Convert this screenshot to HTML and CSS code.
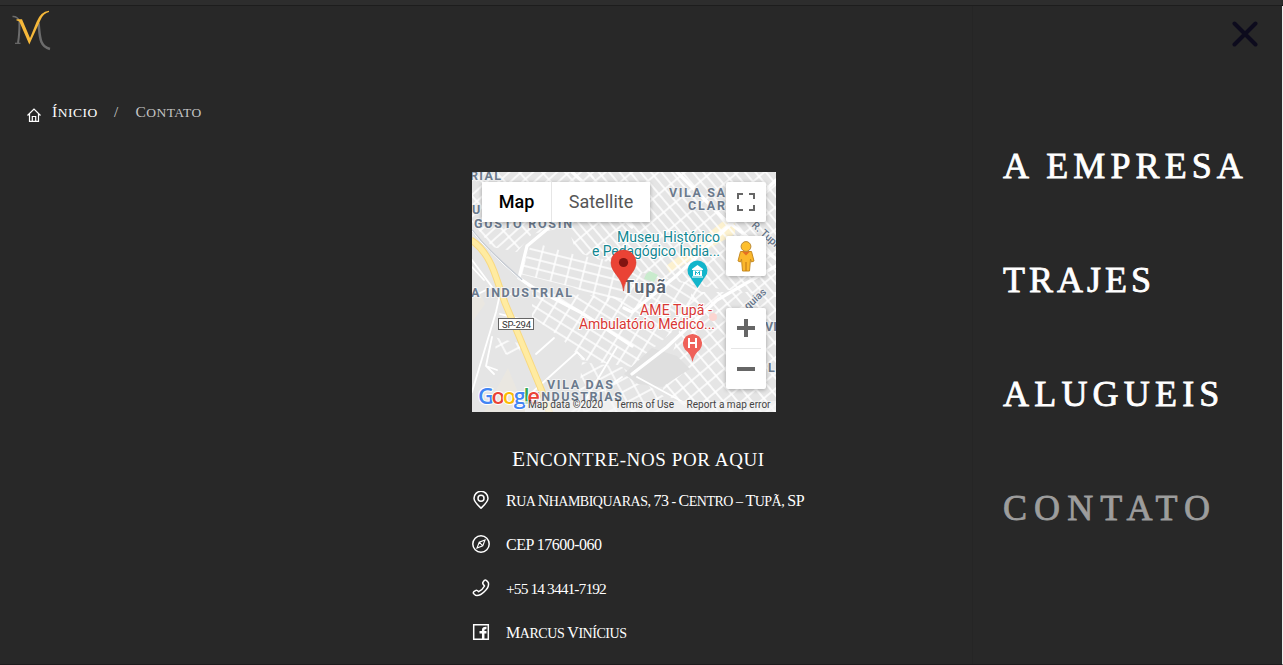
FILE: index.html
```html
<!DOCTYPE html>
<html lang="pt-BR">
<head>
<meta charset="utf-8">
<title>Contato</title>
<link rel="stylesheet" href="styles.css">
</head>
<body>
<div class="topbar"></div>
<div class="page">
  <main class="content">
    <svg class="logo" viewBox="0 0 40 42" width="40" height="42">
      <g fill="none" stroke="#6c6c6c">
        <path d="M0.500 6.500Q5 6 7.500 11" stroke-width="1.500"/>
        <path d="M7.500 11Q7.500 25 6 33" stroke-width="2"/>
        <path d="M3 33.300h5.500" stroke-width="1.200"/>
        <path d="M26.500 13C28 26 27 36 38 39" stroke-width="2.500"/>
      </g>
      <path d="M4.500 9.300h5.500L18 28 24.500 12Q28.500 1.500 37 .7V2Q31.500 3 28.500 10L17.300 34.500 7.500 12Q7 10.500 4.500 10.500Z" fill="#f5b83a"/>
    </svg>
    <nav class="crumbs">
      <svg class="home" viewBox="0 0 14 14" width="14" height="14" fill="none" stroke="#fff" stroke-width="1.200">
        <path d="M.5 7.500 7 1l6.500 6.500M2.500 6v7.300h9V6M5.300 13V8.500h3.400V13"/>
      </svg>
      <a class="crumb-home"><span class="cap">Í</span>nicio</a>
      <span class="slash">/</span>
      <span class="crumb-here"><span class="cap">C</span>ontato</span>
    </nav>
    <section class="contact">
      <div class="map">
        <svg viewBox="0 0 304 240" width="304" height="240">
          <defs>
            <pattern id="g1" width="17" height="8" patternUnits="userSpaceOnUse" patternTransform="rotate(-42)"><path d="M0 1H17M1 0V8" stroke="#fff" stroke-width="1.500"/></pattern>
            <pattern id="g2" width="15" height="9" patternUnits="userSpaceOnUse" patternTransform="translate(55 75) rotate(14)"><path d="M0 1H15M1 0V9" stroke="#fff" stroke-width="1.500"/></pattern>
            <pattern id="g3" width="8" height="17" patternUnits="userSpaceOnUse" patternTransform="rotate(-40)"><path d="M0 1H8M1 0V17" stroke="#fff" stroke-width="1.600"/></pattern>
            <pattern id="g4" width="14" height="10" patternUnits="userSpaceOnUse" patternTransform="rotate(32)"><path d="M0 1H14M1 0V10" stroke="#fff" stroke-width="1.600"/></pattern>
            <pattern id="g5" width="14" height="11" patternUnits="userSpaceOnUse" patternTransform="rotate(-28)"><path d="M0 1H14M1 0V11" stroke="#fff" stroke-width="1.400"/></pattern>
            <pattern id="g6" width="11" height="12" patternUnits="userSpaceOnUse" patternTransform="rotate(-40)"><path d="M0 1H11M1 0V12" stroke="#fff" stroke-width="1.700"/></pattern>
          </defs>
          <rect width="304" height="240" fill="#e5e5e5"/>
          <path d="M0 120h8l5 12L0 150zM36 196l18 44H12z" fill="#eae7e1"/>
          <path d="M215 78 250 50 263 47 263 62 238 76 214 91 198 101 194 94z" fill="#fcf1cf"/>
          <path d="M8 0H125L95 55 60 62 45 80 20 75 0 50V20z" fill="url(#g1)"/>
          <path d="M60 70 104 83 152 90 150 135 100 115 48 102z" fill="url(#g2)"/>
          <path d="M120 0H304V125L215 112 160 98 104 80 96 55z" fill="url(#g3)"/>
          <path d="M60 120 150 125 160 98 235 115 220 140 200 160 160 195 110 188 88 165 60 145z" fill="url(#g4)"/>
          <path d="M220 120H304V240H222L190 220 205 165z" fill="url(#g6)"/>
          <path d="M110 190 150 195 200 230 190 240H105z" fill="url(#g5)"/>
          <path d="M22 165 50 172 45 185 24 180z" fill="url(#g5)"/>
          <path d="M152 202 180 176 205 184 218 197 190 215 166 212z" fill="#dfdfdf"/>
          <path d="M174 102 178 99 186 103 182 110 172 107z" fill="#c9ebcd"/>
          <circle cx="241" cy="145" r="4" fill="#fbd5d1"/>
          <g fill="none" stroke="#fff" stroke-linecap="round">
            <path d="M205 0 250 45 304 87M152 136 160 140 203 105 230 80 304 8M100 0 160 55M55 74 80 53 105 27M55 74 47 106 62 116 108 140 160 174M160 202 195 175 245 128 304 94" stroke-width="3.200"/>
            <path d="M0 220 24 140 28 122 54 122M20 165 14 194 22 202M14 194 25 198M64 182 82 166M55 225 105 180 112 187M145 175 106 240M150 205 100 240M165 205 220 235M0 88 20 115 0 125M0 95 12 108M28 142 60 150" stroke-width="1.800"/>
          </g>
          <path d="M0 58Q13 76 50 108" fill="none" stroke="#c7ccd3" stroke-width="2"/>
          <path d="M0 59Q13 77 50 109L63 119" fill="none" stroke="#fff" stroke-width="1"/>
          <path d="M-1 68Q15 78 24 105L33 131Q53 178 69 217L78 242" fill="none" stroke="#f8d980" stroke-width="7"/>
          <path d="M-1 68Q15 78 24 105L33 131Q53 178 69 217L78 242" fill="none" stroke="#ffeba1" stroke-width="5"/>
          <g class="area">
            <text x="-2" y="7.500" textLength="31">RIAL</text>
            <text x="0" y="42">U</text>
            <text x="2" y="56" textLength="98">GUSTO ROSIN</text>
            <text x="197" y="24.500" textLength="56">VILA SA</text>
            <text x="216" y="37.500" textLength="37">CLAR</text>
            <text x="-1" y="124.500" textLength="101">A INDUSTRIAL</text>
            <text x="75" y="216.500" textLength="66">VILA DAS</text>
            <text x="64" y="229" textLength="86">INDUSTRIAS</text>
            <text x="293" y="159">VI</text>
            <text x="296" y="200">L</text>
          </g>
          <g class="street"><text transform="translate(279 54) rotate(42)">R. Tupis</text><text transform="translate(276 138) rotate(-42)">quias</text></g>
          <text class="city" x="151" y="121" textLength="43">Tupã</text>
          <g class="poi museum">
            <text x="145" y="70" textLength="103">Museu Histórico</text>
            <text x="120" y="84" textLength="128">e Pedagógico Índia...</text>
          </g>
          <g class="poi hospital">
            <text x="168" y="143" textLength="72">AME Tupã -</text>
            <text x="107" y="157" textLength="136">Ambulatório Médico...</text>
          </g>
          <path d="M225.500 116 218 105A10 10 0 1 1 233 105Z" fill="#12b5cb"/>
          <path d="M220 97 225.500 93 231 97V98H220zM221 98.500h9v5.500h-9zM220 104.500h11v1h-11z" fill="#fff"/>
          <path d="M223.500 103v-3.500l2 2 2-2v3.500" fill="none" stroke="#12b5cb"/>
          <path d="M220.500 190Q219 182 213 177.500A9.600 9.600 0 1 1 228 177.500Q222 182 220.500 190Z" fill="#ef6159"/>
          <path d="M217 166v10M224 166v10M217 171h7" stroke="#fff" stroke-width="2"/>
          <path d="M151.500 119C150.500 105 139 101 139 90.500A12.500 12.500 0 0 1 164 90.500C164 101 152.500 105 151.500 119Z" fill="#ea4335" stroke="#d83b2e" stroke-width=".6"/>
          <circle cx="151.500" cy="90.500" r="4.600" fill="#811411"/>
          <rect x="26.500" y="146.500" width="35" height="11" fill="#fff" stroke="#666"/>
          <text class="shield" x="30" y="155.500" textLength="29">SP-294</text>
          <text class="google" x="6" y="232" textLength="62"><tspan fill="#4285f4">G</tspan><tspan fill="#ea4335">o</tspan><tspan fill="#fbbc05">o</tspan><tspan fill="#4285f4">g</tspan><tspan fill="#34a853">l</tspan><tspan fill="#ea4335">e</tspan></text>
          <rect x="53" y="229" width="251" height="11" fill="#f5f5f5" opacity=".7"/>
          <g class="legal">
            <text x="56" y="236" textLength="75">Map data ©2020</text>
            <text x="143" y="236" textLength="59">Terms of Use</text>
            <text x="214.500" y="236" textLength="84">Report a map error</text>
          </g>
        </svg>
        <div class="map-type"><button class="on">Map</button><button>Satellite</button></div>
        <div class="map-tools">
          <div class="tool"><svg viewBox="0 0 18 18" width="18" height="18"><path d="M1 6V1h5M12 1h5v5M17 12v5h-5M6 17H1v-5" fill="none" stroke="#666" stroke-width="2"/></svg></div>
          <div class="tool person"><svg viewBox="0 0 20 32" width="20" height="32">
            <path d="M4.500 11.500h11l2.500 9.500-2.500 1-1-3L13.500 31H6.500L5.500 19l-1 3L2 21z" fill="#fbb72b" stroke="#c58a22"/>
            <path d="m6 11.500 4 4 4-4z" fill="#e56f22"/><path d="M10 22v9" stroke="#bd7414"/>
            <circle cx="10" cy="6.500" r="4.900" fill="#fdbf2d" stroke="#b98a3a"/></svg></div>
          <div class="tool zoom"><svg viewBox="0 0 40 81" width="40" height="81"><path d="M11 20h18M20 11v18M11 61h18" stroke="#666" stroke-width="4"/><path d="M5 40.500h30" stroke="#e6e6e6"/></svg></div>
        </div>
      </div>
      <h2 class="heading"><span class="cap">E</span>ncontre-nos por aqui</h2>
      <ul class="details">
        <li><svg viewBox="0 0 18 18" width="18" height="18"><path d="M9 17.200C6.500 14.800 2 11 2 7.300a7 7 0 0 1 14 0C16 11 11.500 14.800 9 17.200Z"/><circle cx="9" cy="7.200" r="3"/></svg>
          <span class="address"><span class="cap">R</span>ua <span class="cap">N</span>hambiquaras, <span class="cap">73</span> - <span class="cap">C</span>entro – <span class="cap">T</span>upã, <span class="cap">SP</span></span></li>
        <li><svg viewBox="0 0 18 18" width="18" height="18"><circle cx="9" cy="9" r="8.200"/><path d="M13 5 10.800 10.800 5 13 7.200 7.200ZM7.200 7.200l3.600 3.600" stroke-width="1.100"/></svg>
          <span class="cep cap">CEP 17600-060</span></li>
        <li><svg viewBox="0 0 18 18" width="18" height="18"><path d="M12.300 1.400Q13.500.7 14.500 1.500L16.300 3.500Q17.500 8 12.500 12.500 8 17.200 3.500 16.300L1.500 14.500Q1 13.500 1.800 12.700L4 11.400Q5 11 6.700 12.700 10.500 10.800 12.500 7L11 5Q10.500 4 11 3.200Z" stroke-linejoin="round"/></svg>
          <span class="phone cap">+55 14 3441-7192</span></li>
        <li><svg viewBox="0 0 18 18" width="18" height="18"><path d="M1.700 1.700h14.600v14.600H1.700z"/><path d="M11.200 16V7Q11.200 4.700 14.500 5M7.500 9.300h7" stroke-width="2.500"/></svg>
          <span class="social"><span class="cap">M</span>arcus <span class="cap">V</span>inícius</span></li>
      </ul>
    </section>
  </main>
  <aside class="menu">
    <svg class="close" viewBox="0 0 26 26" width="26" height="26"><path d="M2.500 2.500 23.500 23.500M23.500 2.500 2.500 23.500" stroke="#0d0b1d" stroke-width="4" stroke-linecap="round"/></svg>
    <a class="m-empresa">A EMPRESA</a>
    <a class="m-trajes">TRAJES</a>
    <a class="m-alugueis">ALUGUEIS</a>
    <a class="m-contato">CONTATO</a>
  </aside>
</div>
</body>
</html>
```
FILE: styles.css
```css
* { box-sizing: border-box; }
body { margin: 0; height: 665px; overflow: hidden; background: #282828; color: #fff; font-family: "Liberation Serif", serif; }
.topbar { height: 6px; background: #2d2d2d; border-bottom: 1px solid #1d1d1d; }
.page { display: flex; height: 659px; border-right: 1px solid #eee; border-bottom: 1px solid #1d1b1d; }
.content { width: 972px; display: flex; flex-direction: column; }
.logo { margin: 4px 0 0 12px; display: block; flex: none; }
.crumbs { display: flex; align-items: center; height: 20px; margin: 50px 0 0 27px; font-size: 13.500px; line-height: 20px; text-transform: uppercase; }
.crumbs .cap { font-size: 15.500px; }
.home { margin: 5px 11px 0 0; }
.crumb-home { width: 62px; letter-spacing: .5px; }
.slash { width: 21.500px; font-size: 15px; color: #ccc; }
.crumb-here { color: #c4c4c4; letter-spacing: .45px; }
.contact { width: 350px; margin: 50px 0 0 472px; }
.map { position: relative; width: 304px; height: 240px; overflow: hidden; font-family: Roboto, sans-serif; }
.map svg { display: block; }
.area { font-size: 12.500px; font-weight: 700; fill: #6b7a8d; stroke: #f2f2f2; stroke-width: 2px; paint-order: stroke; }
.street { font-size: 10.500px; font-weight: 500; fill: #66758a; stroke: #f2f2f2; stroke-width: 2px; paint-order: stroke; }
.city { font-size: 18px; font-weight: 600; fill: #59636f; stroke: #fff; stroke-width: 2px; paint-order: stroke; }
.poi { font-size: 14px; stroke: #fff; stroke-width: 2px; paint-order: stroke; }
.museum { fill: #118792; }
.hospital { fill: #d93835; }
.shield { font-size: 9.500px; fill: #333; }
.google { font-family: "Open Sans", sans-serif; font-size: 22px; font-weight: 600; stroke: #fff; stroke-width: 2px; paint-order: stroke; }
.legal { font-size: 10px; fill: #444; }
.map-type { position: absolute; left: 10px; top: 10px; display: flex; height: 40px; background: #fff; box-shadow: 0 1px 4px rgba(0,0,0,.3); }
.map-type button { width: 98px; padding: 0 0 2px; border: 0; background: #fff; color: #565656; font: 18px Roboto, sans-serif; }
.map-type .on { width: 70px; border-right: 1px solid #e6e6e6; color: #000; font-weight: 500; }
.map-tools { position: absolute; right: 10px; top: 10px; }
.tool { display: flex; align-items: center; justify-content: center; width: 40px; height: 40px; border-radius: 2px; background: #fff; box-shadow: 0 1px 4px rgba(0,0,0,.3); }
.person { margin-top: 14px; }
.zoom { height: 81px; margin-top: 32px; }
.heading { margin: 33px 0 0 40px; font-size: 19px; line-height: 28px; font-weight: 400; letter-spacing: .6px; text-transform: uppercase; white-space: nowrap; }
.heading .cap { font-size: 21.500px; }
.details { list-style: none; margin: 5px 0 0; padding: 0; font-size: 14px; text-transform: uppercase; white-space: nowrap; }
.details li { display: flex; align-items: center; height: 44px; gap: 16px; }
.details svg { flex: none; fill: none; stroke: #fff; stroke-width: 1.500; margin-top: -3px; }
.details .cap { font-size: 16px; }
.details .address { letter-spacing: -.5px; }
.details .cep { letter-spacing: -.5px; }
.details .phone { font-size: 15.500px; letter-spacing: -.92px; }
.details .social { letter-spacing: -.45px; }
.menu { width: 310px; display: flex; flex-direction: column; padding: 15px 0 0 30px; border-left: 1px solid #252525; font-size: 36px; -webkit-text-stroke: .8px; }
.close { align-self: flex-end; margin: 0 24px 62px 0; flex: none; }
.menu a { height: 114px; line-height: 114px; white-space: nowrap; }
.menu .m-empresa { letter-spacing: 5.100px; }
.menu .m-trajes { letter-spacing: 4px; }
.menu .m-alugueis { letter-spacing: 5.200px; }
.menu .m-contato { letter-spacing: 7.100px; color: #9d9d9d; }
```
